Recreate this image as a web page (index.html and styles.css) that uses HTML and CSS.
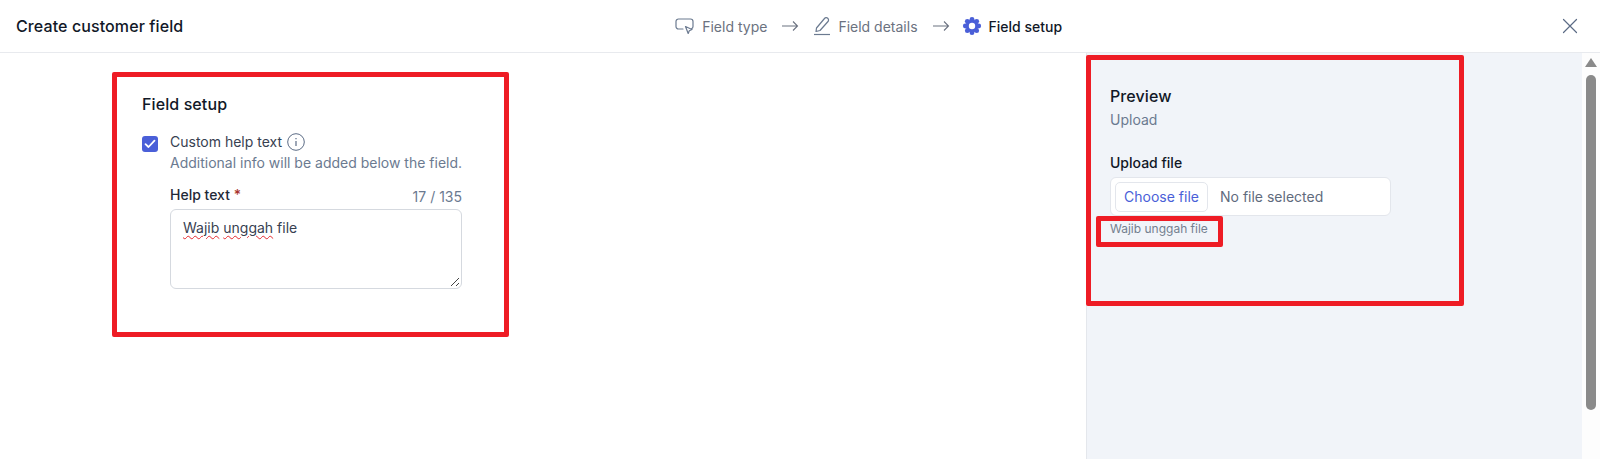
FILE: index.html
```html
<!DOCTYPE html>
<html lang="en">
<head>
<meta charset="utf-8">
<title>Create customer field</title>
<link rel="stylesheet" href="styles.css">
</head>
<body>
<div class="page">
  <header class="topbar">
    <h1 class="title">Create customer field</h1>
    <nav class="steps">
      <span class="step">
        <svg class="step-icon" width="20" height="20" viewBox="0 0 20 20" fill="none" stroke="#6b7a90" stroke-width="1.2" stroke-linejoin="round" stroke-linecap="round"><path d="M8 13H3.500A2.500 2.500 0 0 1 1 10.500V5.500A2.500 2.500 0 0 1 3.500 3H15.500A2.500 2.500 0 0 1 18 5.500V10.500A2.500 2.500 0 0 1 16.500 12.800"/><path d="M10.500 10.500L17 13.500L14.300 14.700L13.200 17.500Z"/></svg>
        Field type
      </span>
      <svg class="arrow" width="18" height="12" viewBox="0 0 18 12" fill="none" stroke="#6b7280" stroke-width="1.100"><path d="M1 6H16.500M12 1.500L16.500 6L12 10.500"/></svg>
      <span class="step">
        <svg class="step-icon" width="18" height="20" viewBox="0 0 18 20" fill="none" stroke="#6b7a90" stroke-width="1.200" stroke-linejoin="round"><path d="M3.500 12L11.500 2.500A2.300 2.300 0 0 1 15 5.500L7 14.500L3 15.500Z"/><path d="M1 18.500H17"/></svg>
        Field details
      </span>
      <svg class="arrow" width="18" height="12" viewBox="0 0 18 12" fill="none" stroke="#6b7280" stroke-width="1.100"><path d="M1 6H16.500M12 1.500L16.500 6L12 10.500"/></svg>
      <span class="step step-active">
        <svg class="step-icon step-gear" width="20" height="20" viewBox="0 0 20 20" fill="#4a5fd8">
          <circle cx="10" cy="10" r="6.500"/>
          <circle cx="10" cy="3.300" r="2.400"/>
          <circle cx="10" cy="16.700" r="2.400"/>
          <circle cx="3.300" cy="10" r="2.400"/>
          <circle cx="16.700" cy="10" r="2.400"/>
          <circle cx="5.300" cy="5.300" r="2.400"/>
          <circle cx="14.700" cy="5.300" r="2.400"/>
          <circle cx="5.300" cy="14.700" r="2.400"/>
          <circle cx="14.700" cy="14.700" r="2.400"/>
          <circle cx="10" cy="10" r="3.200" fill="#fff"/>
        </svg>
        Field setup
      </span>
    </nav>
    <button class="close" type="button" aria-label="Close">
      <svg width="16" height="16" viewBox="0 0 16 16" fill="none" stroke="#5b6b85" stroke-width="1.200" stroke-linecap="round"><path d="M1.500 1.500L14.500 14.500M14.500 1.500L1.500 14.500"/></svg>
    </button>
  </header>

  <div class="body">
    <main class="form-area">
      <section class="setup">
        <h2 class="section-title">Field setup</h2>
        <div class="check-row">
          <span class="checkbox">
            <svg width="12" height="10" viewBox="0 0 12 10" fill="none" stroke="#fff" stroke-width="1.800" stroke-linecap="round" stroke-linejoin="round"><path d="M1.500 5.200L4.500 8L10.500 1.700"/></svg>
          </span>
          <div class="check-text">
            <div class="check-label">Custom help text
              <svg class="info" width="18" height="18" viewBox="0 0 18 18" fill="none" stroke="#5b6b85" stroke-width="1"><circle cx="9" cy="9" r="8.300"/><path d="M9 8V13" stroke-width="1.200"/><path d="M9 5V6.200" stroke-width="1.200"/></svg>
            </div>
            <div class="check-sub">Additional info will be added below the field.</div>
          </div>
        </div>
        <div class="help-field">
          <div class="field-head">
            <span class="field-label">Help text <span class="req">*</span></span>
            <span class="counter">17 / 135</span>
          </div>
          <div class="textarea"><span class="typo">Wajib</span> <span class="typo">unggah</span> file
            <svg class="grip" width="10" height="10" viewBox="0 0 10 10" fill="none" stroke="#444" stroke-width="1"><path d="M1 9L9 1M6 9L9 6"/></svg>
          </div>
        </div>
      </section>
    </main>

    <aside class="preview">
      <h2 class="preview-title">Preview</h2>
      <div class="preview-sub">Upload</div>
      <div class="preview-label">Upload file</div>
      <div class="file-input">
        <span class="file-btn">Choose file</span>
        <span class="file-none">No file selected</span>
      </div>
      <div class="helper">Wajib unggah file</div>
    </aside>

    <div class="scrollbar">
      <span class="scroll-up"></span>
      <span class="scroll-thumb"></span>
    </div>
  </div>

  <div class="mark mark-form"></div>
  <div class="mark mark-preview"></div>
  <div class="mark mark-helper"></div>
</div>
</body>
</html>
```
FILE: styles.css
```css
* { box-sizing: border-box; }
html, body { margin: 0; padding: 0; }
body {
  font-family: Inter, "Liberation Sans", sans-serif;
  background: #fff;
  color: #111827;
}
.page {
  position: relative;
  width: 1600px;
  height: 459px;
  overflow: hidden;
  display: flex;
  flex-direction: column;
}
.topbar {
  height: 53px;
  flex: none;
  display: flex;
  align-items: center;
  justify-content: space-between;
  padding: 0 16px;
  border-bottom: 1px solid #e8eaee;
}
.title {
  margin: 0;
  font-size: 16px;
  font-weight: 500;
  letter-spacing: .1px;
  color: #111827;
}
.steps {
  display: flex;
  align-items: center;
  gap: 14px;
  font-size: 14px;
  color: #6b7280;
  margin-left: -8px;
}
.step {
  display: flex;
  align-items: center;
  gap: 7px;
}
.step-active {
  color: #111827;
  font-weight: 500;
}
.step-gear { margin-left: -2px; }
.close {
  width: 16px;
  height: 16px;
  padding: 0;
  border: 0;
  background: none;
  display: block;
  line-height: 0;
  margin-right: 6px;
}
.body {
  flex: 1;
  display: flex;
  min-height: 0;
}
.form-area {
  flex: 1;
  min-width: 0;
  padding: 41px 0 0 142px;
}
.setup { width: 320px; }
.section-title {
  margin: 0;
  font-size: 16px;
  line-height: 20px;
  font-weight: 500;
  letter-spacing: .1px;
  color: #111827;
}
.check-row {
  display: flex;
  gap: 12px;
  margin-top: 18px;
}
.checkbox {
  width: 16px;
  height: 16px;
  margin-top: 4px;
  flex: none;
  border-radius: 3px;
  background: #4a5fd8;
  display: flex;
  align-items: center;
  justify-content: center;
}
.check-text { font-size: 14px; line-height: 20px; }
.check-label {
  display: flex;
  align-items: center;
  gap: 5px;
  color: #374151;
}
.check-sub { color: #6b7a90; white-space: nowrap; margin-top: 1px; }
.help-field { margin: 12px 0 0 28px; width: 292px; }
.field-head {
  display: flex;
  justify-content: space-between;
  align-items: flex-end;
  font-size: 14px;
  line-height: 20px;
  margin-bottom: 4px;
}
.field-label { font-weight: 500; color: #1f2937; }
.req { color: #a8322a; }
.counter { color: #6b7a90; position: relative; top: 2px; }
.textarea {
  position: relative;
  height: 80px;
  border: 1px solid #d5d9df;
  border-radius: 6px;
  padding: 8px 12px;
  font-size: 14px;
  line-height: 20px;
  color: #374151;
}
.typo { text-decoration: underline wavy #e5292f 1px; text-underline-offset: 2px; }
.grip { position: absolute; right: 1px; bottom: 1px; }
.preview {
  width: 496px;
  flex: none;
  background: #f1f4f9;
  border-left: 1px solid #e4e7ec;
  padding: 32px 0 0 23px;
}
.preview-title {
  margin: 0;
  font-size: 16px;
  line-height: 22px;
  font-weight: 500;
  letter-spacing: .1px;
  color: #111827;
}
.preview-sub {
  font-size: 14px;
  line-height: 20px;
  margin-top: 3px;
  color: #6b7a90;
}
.preview-label {
  margin-top: 23px;
  font-size: 14px;
  line-height: 20px;
  font-weight: 500;
  color: #111827;
}
.file-input {
  margin-top: 4px;
  width: 281px;
  height: 39px;
  background: #fff;
  border: 1px solid #e3e6ec;
  border-radius: 6px;
  display: flex;
  align-items: center;
  padding-left: 4px;
  gap: 12px;
  font-size: 14px;
}
.file-btn {
  width: 93px;
  height: 30px;
  border: 1px solid #e3e6ec;
  border-radius: 5px;
  color: #4a5fd8;
  display: flex;
  align-items: center;
  justify-content: center;
}
.file-none { color: #5f6b7d; }
.helper {
  margin-top: 5px;
  font-size: 12px;
  line-height: 16px;
  color: #747f90;
}
.scrollbar {
  width: 18px;
  flex: none;
  background: #fdfdfd;
  position: relative;
  display: flex;
  flex-direction: column;
  align-items: center;
  padding-top: 5px;
}
.scroll-up {
  width: 0;
  height: 0;
  border-left: 6px solid transparent;
  border-right: 6px solid transparent;
  border-bottom: 9px solid #8a8a8a;
}
.scroll-thumb {
  width: 10px;
  height: 335px;
  margin-top: 8px;
  border-radius: 5px;
  background: #8a8a8a;
}
.mark {
  position: absolute;
  border: 5px solid #ee1c25;
  border-radius: 2px;
  pointer-events: none;
}
.mark-form { left: 112px; top: 72px; width: 397px; height: 265px; }
.mark-preview { left: 1086px; top: 55px; width: 378px; height: 251px; }
.mark-helper { left: 1096px; top: 216px; width: 127px; height: 31px; }
```
